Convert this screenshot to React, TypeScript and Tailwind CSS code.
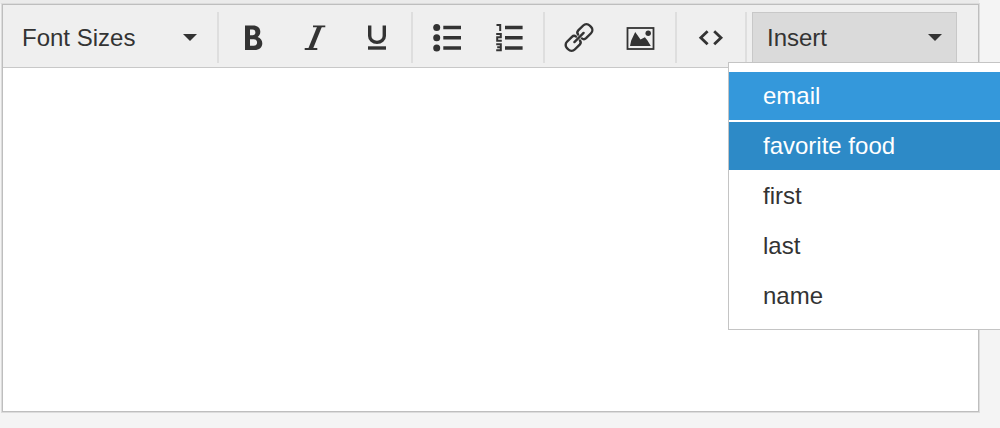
import React, { useState } from "react";

interface ToolButtonProps {
  label: string;
  children: React.ReactNode;
}

const fields = ["email", "favorite food", "first", "last", "name"];
const fontSizes = ["8pt", "10pt", "12pt", "14pt", "18pt", "24pt", "36pt"];

function ToolButton({ label, children }: ToolButtonProps) {
  return (
    <button
      type="button"
      aria-label={label}
      title={label}
      className="flex h-full w-[62px] items-center justify-center hover:bg-[#dadada]"
    >
      <svg width="36" height="35" viewBox="0 0 36 35" fill="none" stroke="currentColor" aria-hidden="true">
        {children}
      </svg>
    </button>
  );
}

function ToolGroup({ children }: { children: React.ReactNode }) {
  return <div className="flex h-[51px] border-r-2 border-[#dedede] px-[3px]">{children}</div>;
}

function Caret() {
  return (
    <svg width="14" height="7" viewBox="0 0 14 7" fill="currentColor" aria-hidden="true">
      <path d="M0 0h14L7 7z" />
    </svg>
  );
}

export default function App() {
  const [menuOpen, setMenuOpen] = useState(true);
  const [active, setActive] = useState("favorite food");
  const [content, setContent] = useState("");

  const insertField = (field: string) => {
    setContent((prev) => prev + `{{${field}}}`);
    setActive(field);
    setMenuOpen(false);
  };

  const itemColor = (field: string) => {
    if (field === active) return "bg-[#2d8ac7] text-white";
    if (field === "email") return "bg-[#3498db] text-white";
    return "hover:bg-[#3498db] hover:text-white";
  };

  return (
    <div className="min-h-screen overflow-hidden bg-[#f4f4f4] font-['Liberation_Sans',Arial,sans-serif] text-2xl text-[#333333]">
      <div className="mr-[21px] h-1 bg-[#ebebeb]" />
      <div className="mr-[21px] ml-0.5 border border-[#bebebe] bg-white shadow-[0_0_0_1px_#dcdcdc]">
        {/* Toolbar */}
        <div className="flex flex-wrap border-b border-[#c8c8c8] bg-[#efefef] pt-[7px] pb-1">
          <div className="h-[51px] border-r-2 border-[#dedede] pr-[5px] pl-1">
            <div className="relative flex h-full w-[205px] items-center">
              <select
                aria-label="Font Sizes"
                defaultValue=""
                className="h-full w-full appearance-none bg-transparent pl-[15px] outline-none"
              >
                <option value="">Font Sizes</option>
                {fontSizes.map((size) => (
                  <option key={size} value={size}>
                    {size}
                  </option>
                ))}
              </select>
              <span className="pointer-events-none absolute right-[15px]">
                <Caret />
              </span>
            </div>
          </div>

          <ToolGroup>
            <ToolButton label="Bold">
              <path
                d="M10 5.5h8c4.6 0 7.3 2.6 7.3 6.3 0 2.3-1 4.2-2.6 5.2 2.9 1 4.6 3.3 4.6 6.2 0 4.2-3 6.8-7.8 6.8H10zM15 9.6v5.6h2.5c1.8 0 2.9-1 2.9-2.8s-1.1-2.8-2.9-2.8zM15 19.2v6.6h3.7c2.1 0 3.4-1.3 3.4-3.3s-1.3-3.3-3.4-3.3z"
                fill="currentColor"
                fillRule="evenodd"
                stroke="none"
              />
            </ToolButton>
            <ToolButton label="Italic">
              <path d="M16 6.3h12.3M7.7 29h12.6" strokeWidth="1.8" />
              <path d="M20.4 6h4.8l-9.3 23h-4.8z" fill="currentColor" stroke="none" />
            </ToolButton>
            <ToolButton label="Underline">
              <path d="M10.7 5.5V16a7.3 6.4 0 0 0 14.6 0V5.5" strokeWidth="3.4" />
              <path d="M9 28h18" strokeWidth="3.4" />
            </ToolButton>
          </ToolGroup>

          <ToolGroup>
            <ToolButton label="Bullet list">
              <path d="M14.3 7.4H32M14.3 17.7H32M14.3 28H32" strokeWidth="3.5" />
              <g fill="currentColor" stroke="none">
                <circle cx="7.7" cy="7.4" r="3.5" />
                <circle cx="7.7" cy="17.7" r="3.5" />
                <circle cx="7.7" cy="28" r="3.5" />
              </g>
            </ToolButton>
            <ToolButton label="Numbered list">
              <path d="M14 7.4h17.6M14 17.7h17.6M14 28h17.6" strokeWidth="3.5" />
              <path
                d="M5.5 5h3.7v6M5.2 14h4.6v3.2H6.2v3.5h4.6M5.2 24.2h4.6v6H5.2M6.2 27.2h3.6"
                strokeWidth="2"
              />
            </ToolButton>
          </ToolGroup>

          <ToolGroup>
            <ToolButton label="Insert link">
              <g transform="rotate(-45 18 17.5)" strokeWidth="2.4" strokeLinecap="round">
                <path d="M16.6 14.8a3.2 3.2 0 0 0-3.1-2.8H6.5A4.5 4.5 0 0 0 2 16.5v2A4.5 4.5 0 0 0 6.5 23h7a3.2 3.2 0 0 0 3.1-2.8" />
                <path d="M19.4 20.2a3.2 3.2 0 0 0 3.1 2.8h7a4.5 4.5 0 0 0 4.5-4.5v-2a4.5 4.5 0 0 0-4.5-4.5h-7a3.2 3.2 0 0 0-3.1 2.8" />
                <path d="M11.5 17.5h13" />
              </g>
            </ToolButton>
            <ToolButton label="Insert image">
              <rect x="4.5" y="8" width="26" height="21" strokeWidth="1.8" />
              <g fill="currentColor" stroke="none">
                <circle cx="25.2" cy="13.3" r="2.7" />
                <path d="M7 26l1.2-5.5 4-8.5 5.3 7.5 4.4-2.2 2.6 3.2 3.3 5.5z" />
              </g>
            </ToolButton>
          </ToolGroup>

          <ToolGroup>
            <ToolButton label="Source code">
              <path d="M14.6 11.3L7.8 17.8l6.8 6.5M21.2 11.3l6.8 6.5-6.8 6.5" strokeWidth="2.8" />
            </ToolButton>
          </ToolGroup>

          {/* Insert menu */}
          <div className="h-[51px] pl-[5px]">
            <div className="relative">
              <button
                type="button"
                aria-haspopup="menu"
                aria-expanded={menuOpen}
                onClick={() => setMenuOpen(!menuOpen)}
                className="flex h-[51px] w-[205px] items-center justify-between border border-[#c8c8c8] bg-[#dadada] px-[14px]"
              >
                Insert
                <Caret />
              </button>
              {menuOpen && (
                <div
                  role="menu"
                  className="absolute top-[50px] -left-6 z-10 flex w-[320px] flex-col gap-0.5 border border-[#c4c4c4] bg-white py-[9px]"
                >
                  {fields.map((field) => (
                    <button
                      key={field}
                      type="button"
                      role="menuitem"
                      onClick={() => insertField(field)}
                      className={`h-12 pl-[34px] text-left ${itemColor(field)}`}
                    >
                      {field}
                    </button>
                  ))}
                </div>
              )}
            </div>
          </div>
        </div>

        {/* Editing area */}
        <textarea
          aria-label="Message body"
          value={content}
          onChange={(e) => setContent(e.target.value)}
          className="block h-[343px] w-full resize-none bg-white p-4 outline-none"
        />
      </div>
    </div>
  );
}
